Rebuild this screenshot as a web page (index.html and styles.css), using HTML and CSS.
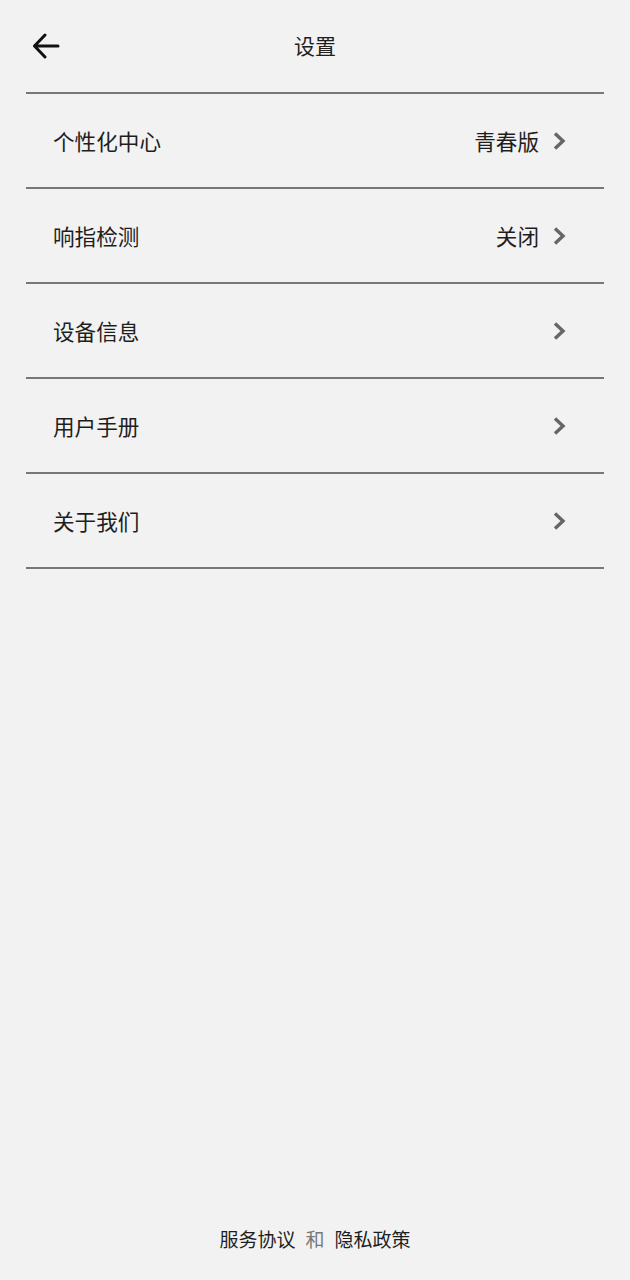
FILE: index.html
```html
<!DOCTYPE html>
<html lang="zh">
<head>
<meta charset="utf-8">
<link rel="stylesheet" href="styles.css">
</head>
<body>
<div class="page">
  <header class="topbar">
    <svg class="back" width="28" height="26" viewBox="0 0 28 26"><path d="M26 13H3M13 2L2.5 13L13 24" fill="none" stroke="#111" stroke-width="3" stroke-linecap="round" stroke-linejoin="round"/></svg>
    <div class="title">设置</div>
  </header>
  <ul class="list">
    <li class="row"><span class="label">个性化中心</span><span class="value">青春版</span><svg class="chev" width="14" height="20" viewBox="0 0 14 20"><path d="M3 2.5L11 10L3 17.5" fill="none" stroke="#666" stroke-width="3.4"/></svg></li>
    <li class="row"><span class="label">响指检测</span><span class="value">关闭</span><svg class="chev" width="14" height="20" viewBox="0 0 14 20"><path d="M3 2.5L11 10L3 17.5" fill="none" stroke="#666" stroke-width="3.4"/></svg></li>
    <li class="row"><span class="label">设备信息</span><svg class="chev" width="14" height="20" viewBox="0 0 14 20"><path d="M3 2.5L11 10L3 17.5" fill="none" stroke="#666" stroke-width="3.4"/></svg></li>
    <li class="row"><span class="label">用户手册</span><svg class="chev" width="14" height="20" viewBox="0 0 14 20"><path d="M3 2.5L11 10L3 17.5" fill="none" stroke="#666" stroke-width="3.4"/></svg></li>
    <li class="row"><span class="label">关于我们</span><svg class="chev" width="14" height="20" viewBox="0 0 14 20"><path d="M3 2.5L11 10L3 17.5" fill="none" stroke="#666" stroke-width="3.4"/></svg></li>
  </ul>
  <footer class="footer"><span class="link">服务协议</span><span class="and">和</span><span class="link">隐私政策</span></footer>
</div>
</body>
</html>
```

FILE: styles.css
```css
html, body {
  margin: 0;
  padding: 0;
  background: #f2f2f2;
}
body {
  font-family: "Noto Sans CJK SC", "Noto Sans", sans-serif;
  color: #1e1e1e;
}
.page {
  height: 1280px;
  display: flex;
  flex-direction: column;
}
.topbar {
  position: relative;
  height: 92px;
  display: flex;
  align-items: center;
  justify-content: center;
}
.back {
  position: absolute;
  left: 32px;
  top: 33px;
}
.title {
  font-size: 21px;
  line-height: 1;
  margin-top: -2px;
}
.list {
  list-style: none;
  margin: 0 26px;
  padding: 0;
  border-top: 2px solid #777;
}
.row {
  height: 93px;
  border-bottom: 2px solid #777;
  display: flex;
  align-items: center;
  padding: 0 38px 0 27px;
  font-size: 21.6px;
}
.label {
  flex: 1;
}
.value {
  margin-right: 13px;
}
.chev {
  display: block;
}
.footer {
  margin-top: auto;
  height: 51px;
  display: flex;
  justify-content: center;
  align-items: flex-start;
  font-size: 19px;
  gap: 10px;
  line-height: 1;
}
.footer .and {
  color: #777;
}
```
